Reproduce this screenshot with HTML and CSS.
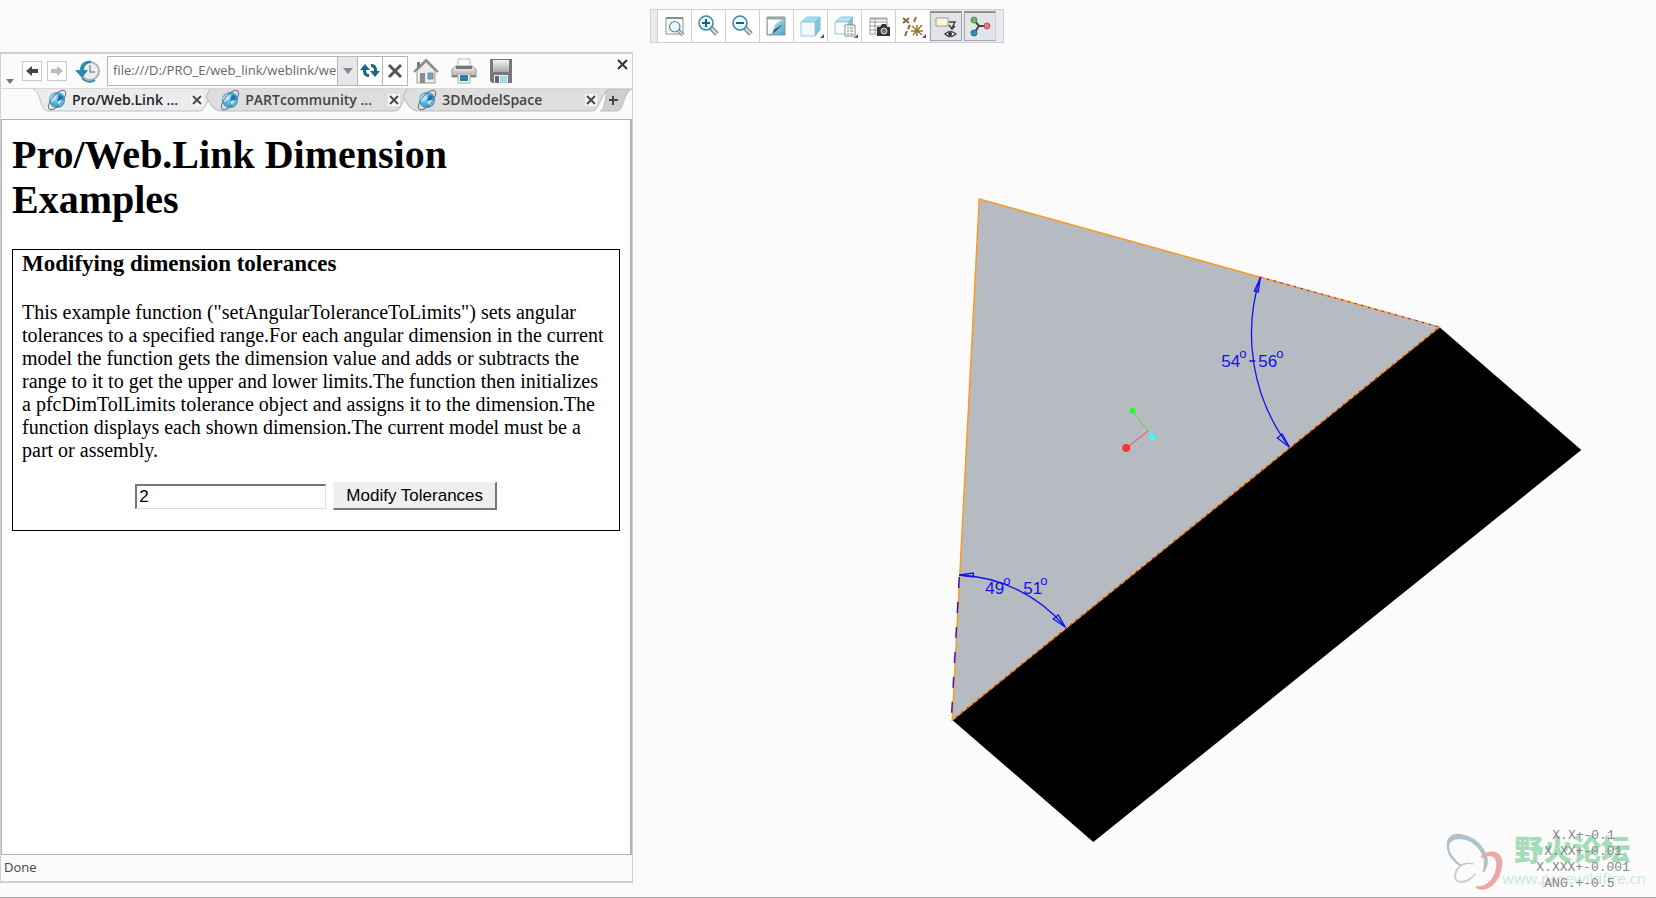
FILE: index.html
```
<!DOCTYPE html>
<html lang="en">
<head>
    <meta charset="UTF-8">
    <meta name="viewport" content="width=device-width, initial-scale=1.0">
    <title>Pro/Web.Link Dimension Examples</title>
    <link rel="stylesheet" href="styles.css">
</head>

<body>
    <svg class="defs" aria-hidden="true">
        <defs>
            <linearGradient id="blue" x1="0" y1="0" x2="1" y2="1">
                <stop offset="0" stop-color="#d8f2fa"/>
                <stop offset="1" stop-color="#4ba3c6"/>
            </linearGradient>
            <radialGradient id="ball" cx=".4" cy=".4" r=".6">
                <stop offset="0" stop-color="#8fd4f4"/>
                <stop offset="1" stop-color="#2b93ca"/>
            </radialGradient>
            <linearGradient id="metal" x1="0" y1="0" x2="0" y2="1">
                <stop offset="0" stop-color="#f4f4f4"/>
                <stop offset="1" stop-color="#a8a8a8"/>
            </linearGradient>
            <symbol id="globe" viewBox="0 0 22 22">
                <circle cx="11" cy="11" r="8" fill="url(#ball)"/>
                <path d="M4 9l4-4 3 1-1 4-5 3zM12 12l4-2 2 2-4 5-2-2z" fill="#c4eafa"/>
                <path d="M11 12l2-6 4 1-1 4z" fill="#1674ad"/>
                <ellipse cx="11" cy="11" rx="12" ry="5" transform="rotate(-50 11 11)" fill="none" stroke="#6b747c"/>
            </symbol>
            <symbol id="cross" viewBox="0 0 12 12">
                <path d="M2 2l8 8M10 2l-8 8" stroke="#4a4a4a" stroke-width="2"/>
            </symbol>
            <symbol id="lens" viewBox="0 0 24 24">
                <path d="M13 13l7 7" stroke="#8a8f94" stroke-width="5"/>
                <path d="M13 13l7 7" stroke="#dcdee0" stroke-width="2"/>
                <circle cx="9" cy="9" r="7" fill="#e9f6fb" stroke="#3a86a8" stroke-width="1.5"/>
            </symbol>
        </defs>
    </svg>

    <div class="wrapper">
        <!-- embedded browser -->
        <section class="browser">
            <div class="navbar">
                <button class="menu" aria-label="Menu"><svg width="8" height="5"><path d="M0 0h8l-4 5z" fill="#777"/></svg></button>
                <button class="nav" aria-label="Back"><svg width="14" height="14"><path d="M1 7l6-5v3h6v4H7v3z" fill="#444"/></svg></button>
                <button class="nav" aria-label="Forward"><svg width="14" height="14"><path d="M13 7L7 2v3H1v4h6v3z" fill="#bbb"/></svg></button>
                <button class="icon history" aria-label="History">
                    <svg width="26" height="24" viewBox="0 0 26 24">
                        <circle cx="15" cy="12" r="9" fill="#e9eef2" stroke="#aab4bb" stroke-width="2"/>
                        <path d="M16 2C9 1 5 6 5 11H0l7 8 6-8H9c0-4 3-7 7-7z" fill="#2d88ad"/>
                        <path d="M7 19c3 4 9 5 13 2" fill="none" stroke="#2d88ad" stroke-width="2"/>
                        <path d="M15 6v7h5" fill="none" stroke="#8a949b" stroke-width="1.5"/>
                    </svg>
                </button>
                <div class="address">
                    <input class="url" type="text" aria-label="Address" value="file:///D:/PRO_E/web_link/weblink/weblinkexamples">
                    <button class="drop" aria-label="Recent addresses"><svg width="10" height="6"><path d="M0 0h10L5 6z" fill="#888"/></svg></button>
                    <button class="reload" aria-label="Reload">
                        <svg width="20" height="18" viewBox="0 0 20 18">
                            <path d="M5 2L0 8h3c0 5 2 7 6 7v-3c-2 0-3-1-3-4h4z" fill="#1d6587"/>
                            <path d="M15 15l5-6h-3c0-5-2-7-6-7v3c2 0 3 1 3 4h-4z" fill="#1d6587"/>
                        </svg>
                    </button>
                    <button class="stop" aria-label="Stop"><svg width="16" height="16"><path d="M2 2l12 12M14 2L2 14" stroke="#555" stroke-width="3"/></svg></button>
                </div>
                <button class="icon" aria-label="Home">
                    <svg width="26" height="26" viewBox="0 0 26 26">
                        <path d="M4 4h3v6H4z" fill="#777"/>
                        <path d="M4 13l9-9 9 9v12H4z" fill="#ededed" stroke="#999"/>
                        <path d="M1 14L13 2l12 12" fill="none" stroke="#888" stroke-width="2"/>
                        <path d="M7 15h5v10H7z" fill="#8b8b8b"/>
                        <path d="M15 15h5v6h-5z" fill="#6aa4c4" stroke="#888"/>
                    </svg>
                </button>
                <button class="icon" aria-label="Print">
                    <svg width="26" height="26" viewBox="0 0 26 26">
                        <path d="M7 1h12v10H7z" fill="#fff" stroke="#bbb"/>
                        <path d="M1 11l4-3h16l4 3v8H1z" fill="url(#metal)" stroke="#999"/>
                        <path d="M5 8h16v3H5z" fill="#777"/>
                        <path d="M1 17h24v2H1z" fill="#888"/>
                        <path d="M7 16h12v9H7z" fill="#f4f4f4" stroke="#aaa"/>
                        <path d="M9 17h8v6H9z" fill="#2682a9"/>
                    </svg>
                </button>
                <button class="icon" aria-label="Save">
                    <svg width="24" height="26" viewBox="0 0 24 26">
                        <path d="M1 1h22v24H3l-2-2z" fill="#777"/>
                        <path d="M4 2h16v12H4z" fill="url(#metal)"/>
                        <path d="M5 17h14v8H5z" fill="#e8f2f7"/>
                        <path d="M11 18h7v7h-7z" fill="#a8d7ea"/>
                        <path d="M6 18h4v7H6z" fill="#666"/>
                    </svg>
                </button>
                <button class="close" aria-label="Close browser"><svg width="11" height="11"><path d="M1 1l9 9M10 1l-9 9" stroke="#333" stroke-width="2"/></svg></button>
            </div>

            <div class="tabs">
                <div class="tab active">
                    <svg class="shape" viewBox="0 0 200 23" preserveAspectRatio="none"><path d="M0 0C8 1 8 22 16 22H182C190 22 192 1 200 0"/></svg>
                    <svg class="globe"><use href="#globe"/></svg>
                    <a href="#" class="label">Pro/Web.Link ...</a>
                    <button class="x" aria-label="Close tab"><svg width="12" height="12"><use href="#cross"/></svg></button>
                </div>
                <div class="tab">
                    <svg class="shape" viewBox="0 0 200 23" preserveAspectRatio="none"><path d="M4 0L0 8C6 18 8 22 16 22H182C190 22 192 1 200 0"/></svg>
                    <svg class="globe"><use href="#globe"/></svg>
                    <a href="#" class="label">PARTcommunity ...</a>
                    <button class="x" aria-label="Close tab"><svg width="12" height="12"><use href="#cross"/></svg></button>
                </div>
                <div class="tab">
                    <svg class="shape" viewBox="0 0 200 23" preserveAspectRatio="none"><path d="M4 0L0 8C6 18 8 22 16 22H182C190 22 192 1 200 0"/></svg>
                    <svg class="globe"><use href="#globe"/></svg>
                    <a href="#" class="label">3DModelSpace</a>
                    <button class="x" aria-label="Close tab"><svg width="12" height="12"><use href="#cross"/></svg></button>
                </div>
                <button class="newtab" aria-label="New tab">
                    <svg width="32" height="23" viewBox="0 0 32 23">
                        <path d="M8 0h24c-8 1-8 22-15 22H0C6 21 5 2 8 0z" fill="#cfcfcf" stroke="#bcbcbc"/>
                        <path d="M13 7v9M9 11h9" stroke="#444" stroke-width="2"/>
                    </svg>
                </button>
            </div>

            <div class="page">
                <h1>Pro/Web.Link Dimension Examples</h1>
                <div class="example">
                    <h3>Modifying dimension tolerances</h3>
                    <p>This example function ("setAngularToleranceToLimits") sets angular tolerances to a specified range.For each angular dimension in the current model the function gets the dimension value and adds or subtracts the range to it to get the upper and lower limits.The function then initializes a pfcDimTolLimits tolerance object and assigns it to the dimension.The function displays each shown dimension.The current model must be a part or assembly.</p>
                    <form class="form">
                        <input class="range" type="text" aria-label="Tolerance range" value="2">
                        <button class="modify" type="button">Modify Tolerances</button>
                    </form>
                </div>
            </div>
            <div class="status">Done</div>
        </section>

        <!-- model window -->
        <main class="graphics">
            <div class="toolbar">
                <button aria-label="Refit">
                    <svg width="24" height="24" viewBox="0 0 24 24">
                        <path d="M3 4h17v16H3z" fill="#fff" stroke="#8d8d8d"/>
                        <path d="M3 4h17" stroke="#8d8d8d" stroke-width="2"/>
                        <svg x="5" y="6" width="18" height="18"><use href="#lens"/></svg>
                    </svg>
                </button>
                <button aria-label="Zoom in">
                    <svg width="24" height="24" viewBox="0 0 24 24"><use href="#lens" width="24" height="24"/><path d="M9 5v8M5 9h8" stroke="#11658a" stroke-width="2"/></svg>
                </button>
                <button aria-label="Zoom out">
                    <svg width="24" height="24" viewBox="0 0 24 24"><use href="#lens" width="24" height="24"/><path d="M5 9h8" stroke="#11658a" stroke-width="2"/></svg>
                </button>
                <button aria-label="Repaint">
                    <svg width="24" height="24" viewBox="0 0 24 24">
                        <path d="M2 3h18v18H2z" fill="url(#blue)" stroke="#8a9297"/>
                        <path d="M3 6h14C11 8 8 12 8 19l-5 1z" fill="#fff"/>
                        <path d="M2 3h18v2H2z" fill="#96a4ac"/>
                        <path d="M17 11l-6 6-4 3 2-4 7-5z" fill="#265970"/>
                    </svg>
                </button>
                <button class="more" aria-label="Display style">
                    <svg width="24" height="24" viewBox="0 0 24 24">
                        <path d="M2 8l6-5h13l-5 5z" fill="#a3dbec" stroke="#8fcbde"/>
                        <path d="M16 8l5-5v13l-5 6z" fill="#7cc5dd" stroke="#7cbdd3"/>
                        <path d="M2 8h14v14H2z" fill="#f4fbfd" stroke="#94c8d8"/>
                    </svg>
                </button>
                <button class="more" aria-label="Saved orientations">
                    <svg width="24" height="24" viewBox="0 0 24 24">
                        <path d="M2 8l6-5h12l-5 5z" fill="#b9e4f1" stroke="#86c3d7"/>
                        <path d="M15 8l5-5v13l-5 5z" fill="#7cc5dd"/>
                        <path d="M2 8h13v12H2z" fill="#f8fcfd" stroke="#94c8d8"/>
                        <path d="M12 11h10v11H12z" fill="#fff" stroke="#888"/>
                        <path d="M14 14h2m1 0h3m-6 3h2m1 0h3m-6 3h2m1 0h3" stroke="#777"/>
                    </svg>
                </button>
                <button aria-label="View manager">
                    <svg width="24" height="24" viewBox="0 0 24 24">
                        <path d="M3 4h17v16H3z" fill="#fff" stroke="#999"/>
                        <path d="M3 5h17M3 8h17M3 12h17M3 16h17M8 4v16" stroke="#999"/>
                        <path d="M10 13h3l2-3h4l1 3h3v9H10z" fill="#333"/>
                        <circle cx="17" cy="17" r="3" fill="#777" stroke="#ddd"/>
                    </svg>
                </button>
                <button class="more" aria-label="Datum display">
                    <svg width="24" height="24" viewBox="0 0 24 24">
                        <path d="M2 4l6 5M8 4L2 9M15 3l-2 5M9 11l-2 4M6 17l-2 5" stroke="#8b682b" stroke-width="2"/>
                        <path d="M16 11v11M11 12l10 9M10 17h12M21 11l-9 10" stroke="#9a7433" stroke-width="1.5"/>
                    </svg>
                </button>
                <button class="pressed" aria-label="Annotation display">
                    <svg width="24" height="24" viewBox="0 0 24 24">
                        <path d="M2 3h12v8H2z" fill="#fff5d5" stroke="#999"/>
                        <path d="M15 7h6l-3 6M15 10l3 4 3-3" fill="none" stroke="#444" stroke-width="1.5"/>
                        <path d="M11 19q5-5 11 0q-6 5-11 0z" fill="#fff" stroke="#444" stroke-width="1.5"/>
                        <circle cx="16" cy="19" r="2" fill="#333"/>
                    </svg>
                </button>
                <button class="pressed" aria-label="Spin center">
                    <svg width="24" height="24" viewBox="0 0 24 24">
                        <path d="M6 5l5 6-5 7M11 11h8" fill="none" stroke="#444" stroke-width="2"/>
                        <circle cx="6" cy="5" r="3" fill="#68b76a" stroke="#4c904d"/>
                        <circle cx="19" cy="11" r="3" fill="#ea7777" stroke="#bb4c4c"/>
                        <circle cx="6" cy="18" r="3" fill="#3c8db5" stroke="#246c8e"/>
                    </svg>
                </button>
            </div>

            <svg class="model" viewBox="634 43 1022 854" role="img" aria-label="Model with angular dimensions">
                <path class="side" d="M953 720L1440 327L1582 450L1094 842z"/>
                <path class="face" d="M980 199L1440 327L953 720z"/>
                <path class="witness" d="M960 577L952 720"/>
                <path class="witness fine" d="M1261 277L1440 327L953 720"/>

                <!-- angular dimensions -->
                <g class="dim">
                    <path d="M1261 277A188 188 0 0 0 1290 447M1250 361h6"/>
                    <path d="M1261 278l-6 13 4 1zM1290 447l-12-9 5-4z"/>
                    <path d="M960 575A147 147 0 0 1 1066 627"/>
                    <path d="M960 575l14-2v4zM1066 627l-12-8 5-4z"/>
                </g>
                <g class="dimtext">
                    <text x="1222" y="367">54</text><text class="deg" x="1240" y="358">o</text>
                    <text x="1259" y="367">56</text><text class="deg" x="1277" y="358">o</text>
                    <text x="986" y="594">49</text><text class="deg" x="1004" y="585">o</text>
                    <text x="1024" y="594">51</text><text class="deg" x="1041" y="585">o</text>
                </g>

                <!-- spin center -->
                <path d="M1149 431L1133 411" stroke="#4cdb4c"/>
                <path d="M1149 431L1127 448" stroke="#f04848"/>
                <path d="M1149 431L1153 437" stroke="#3ff"/>
                <circle cx="1133" cy="411" r="3" fill="#2f2"/>
                <circle cx="1153" cy="437" r="3" fill="#3ff"/>
                <circle cx="1127" cy="448" r="4" fill="#f33"/>

                <!-- forum mark -->
                <g class="mark">
                    <path d="M1484 872C1494 857 1480 838 1461 835C1443 833 1445 855 1462 866C1447 858 1442 838 1461 838C1478 839 1490 857 1484 872z" fill="#b0c1cd" stroke="#b0c1cd" stroke-width="2"/>
                    <path d="M1482 857C1491 849 1503 852 1502 864C1501 881 1488 893 1477 887C1489 889 1498 876 1498 864C1498 855 1490 853 1482 857z" fill="#eea6a8" stroke="#eea6a8" stroke-width="2"/>
                    <path d="M1474 864C1462 861 1454 872 1457 880C1463 884 1472 879 1476 873C1472 882 1461 885 1456 880C1453 869 1463 860 1474 864z" fill="#c4ccd2" stroke="#c4ccd2"/>
                    <text class="forum" x="1515" y="861">野火论坛</text>
                    <text class="site" x="1503" y="884">www.proewildfire.cn</text>
                </g>
                <g class="general">
                    <text x="1553" y="839">X.X+-0.1</text>
                    <text x="1545" y="855">X.XX+-0.01</text>
                    <text x="1537" y="871">X.XXX+-0.001</text>
                    <text x="1545" y="887">ANG.+-0.5</text>
                </g>
            </svg>
        </main>
    </div>
</body>
</html>
```
FILE: styles.css
```
* {
    box-sizing: border-box;
}

body {
    margin: 0;
    background: #fbfbfb;
    font-family: "Open Sans", "Noto Sans", sans-serif;
    font-size: 14px;
    color: #444;
}

button {
    padding: 0;
    border: none;
    background: none;
}

svg {
    display: block;
}

.defs {
    position: absolute;
    width: 0;
    height: 0;
}

.wrapper {
    display: flex;
    min-height: 100vh;
    border-bottom: 1px solid #aaa;
}

/* browser */

.browser {
    display: flex;
    flex-direction: column;
    width: 38.25%;
    margin: 52px 0 14px;
    border: 1px solid #d0d0d2;
    border-width: 2px 1px;
}

.navbar {
    display: flex;
    align-items: center;
    height: 34px;
    padding: 0 4px;
}

.menu {
    align-self: flex-end;
    margin: 0 8px 4px 1px;
}

.nav {
    display: grid;
    place-items: center;
    width: 20px;
    height: 20px;
    margin-right: 5px;
    border: 1px solid #c8cacc;
    background: #fff;
}

.icon {
    margin-right: 12px;
}

.history {
    margin: 0 6px 0 3px;
}

.address {
    display: flex;
    width: 301px;
    height: 30px;
    margin-right: 5px;
    border: 1px solid #b4b6ba;
    background: #fff;
}

.address button {
    display: grid;
    place-items: center;
    width: 25px;
    border-left: 1px solid #b4b6ba;
}

.address .drop {
    width: 20px;
    background: #e6e7ea;
}

.url {
    flex: 1;
    min-width: 0;
    padding: 0 0 2px 5px;
    border: none;
    background: none;
    font: inherit;
    font-size: 13px;
    color: #666;
}

.close {
    align-self: flex-start;
    margin: 5px 0 0 auto;
}

/* tabs */

.tabs {
    display: flex;
    height: 31px;
    padding-left: 32px;
    border-top: 1px solid #d8d8da;
}

.tab {
    position: relative;
    display: flex;
    align-items: center;
    width: 208px;
    height: 23px;
    margin-left: -10px;
    padding: 0 13px 2px 13px;
}

.tab.active {
    width: 184px;
    margin-left: 0;
}

.shape {
    position: absolute;
    inset: 0;
    width: 100%;
    height: 100%;
    fill: #dedede;
    stroke: #bcbcbc;
}

.active .shape {
    fill: #ebecee;
}

.globe {
    position: relative;
    width: 22px;
    height: 22px;
    margin-right: 4px;
    overflow: visible;
}

.label {
    position: relative;
    flex: 1;
    font-weight: 600;
    line-height: 20px;
    white-space: nowrap;
    color: #444;
    text-decoration: none;
}

.active .label {
    color: #222;
}

.x {
    position: relative;
    background: #f6f6f6;
}

.newtab {
    height: 23px;
    margin-left: -10px;
}

/* web page */

.page {
    flex: 1;
    padding: 0 10px;
    border: 1px solid #b0b1b5;
    border-right-width: 2px;
    background: #fff;
    font-family: "Liberation Serif", serif;
    color: #000;
}

h1 {
    margin: 12px 0 27px;
    font-size: 40px;
    line-height: 45px;
}

.example {
    padding: 0 9px 20px;
    border: 1px solid #000;
}

h3 {
    margin: 0 0 23px;
    font-size: 23px;
    line-height: 28px;
}

p {
    margin: 0 0 20px;
    font-size: 20px;
    line-height: 23px;
}

.form {
    display: flex;
    justify-content: center;
    align-items: center;
    gap: 7px;
}

.range,
.modify {
    font-family: "Liberation Sans", sans-serif;
    font-size: 17px;
    color: #000;
}

.range {
    width: 191px;
    height: 25px;
    padding: 0 2px;
    border: 2px solid #767676;
    border-right: 1px solid #ddd;
    border-bottom: 1px solid #ddd;
}

.modify {
    height: 28px;
    padding: 0 12px;
    border: 1px solid #f4f4f4;
    border-right: 2px solid #777;
    border-bottom: 2px solid #777;
    background: #efefef;
}

.status {
    height: 26px;
    padding-left: 3px;
    font-size: 13px;
    line-height: 24px;
}

/* graphics window */

.graphics {
    display: flex;
    flex: 1;
    flex-direction: column;
    min-width: 0;
}

.toolbar {
    display: flex;
    align-self: flex-start;
    height: 34px;
    margin: 9px 0 0 17px;
    padding: 0 6px;
    border: 1px solid #ced0d6;
    background: #e9eaee;
}

.toolbar button {
    position: relative;
    display: grid;
    place-items: center;
    width: 34px;
    border-left: 1px solid #ced0d6;
    background: #fff;
}

.toolbar button:last-child {
    border-right: 1px solid #ced0d6;
}

.more::after {
    content: "";
    position: absolute;
    right: 3px;
    bottom: 4px;
    border: 2px solid #555;
    border-top-color: transparent;
    border-left-color: transparent;
}

.toolbar .pressed {
    height: 30px;
    margin: 1px;
    width: 32px;
    border: 1px solid #a4a6ac;
    border-top: 2px solid #909296;
    background: #e2e4e9;
}

.model {
    flex: 1 1 0px;
    width: 100%;
    height: 0;
    min-height: 0;
}

.side {
    fill: #000;
}

.face {
    fill: #b6bbc2;
    stroke: #ff981c;
    stroke-width: 1.5;
}

.witness {
    fill: none;
    stroke: #2a1be0;
    stroke-width: 1.5;
    stroke-dasharray: 11 14;
}

.witness.fine {
    stroke-width: 1;
    stroke-dasharray: 2 5;
}

.dim {
    fill: none;
    stroke: #1212f0;
    stroke-width: 1.3;
}

.dimtext {
    font-family: "Liberation Sans Narrow", "Liberation Sans", sans-serif;
    font-size: 17px;
    fill: #1212e6;
}

.deg {
    font-size: 13px;
}

.forum {
    font-family: "Noto Sans CJK SC", sans-serif;
    font-size: 29px;
    font-weight: 900;
    fill: #a4dcb7;
}

.site {
    font-size: 15px;
    fill: #c6e6e5;
}

.general {
    font-family: "Liberation Mono", monospace;
    font-size: 13px;
    fill: #888;
}
```
